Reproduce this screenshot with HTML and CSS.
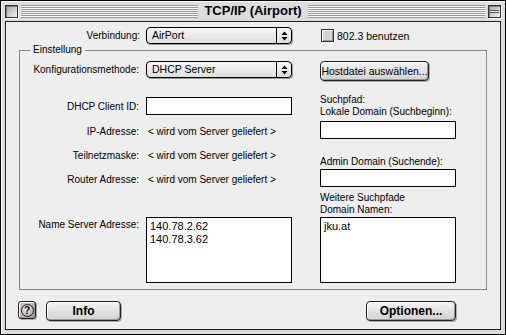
FILE: index.html
```html
<!DOCTYPE html>
<html lang="de">
  <head>
    <meta charset="UTF-8" />
    <title>TCP/IP (Airport)</title>
    <link rel="stylesheet" href="styles.css">
  </head>
  <body>
    <div class="window">
      <div class="titlebar">
        <span class="close-box"></span>
        <span class="stripes"></span>
        <span class="title">TCP/IP (Airport)</span>
        <span class="stripes"></span>
        <span class="shade-box"></span>
      </div>

      <div class="panel">
        <div class="top-row">
          <span class="top-label">Verbindung:</span>
          <div class="popup">
            <span class="popup-text">AirPort</span>
            <span class="popup-arrows">
              <svg width="7" height="10" viewBox="0 0 7 10"><path d="M3.5 0.5 L6.5 4 H0.5 Z M0.5 6 H6.5 L3.5 9.5 Z" fill="#000"/></svg>
            </span>
          </div>
          <label class="check"><span class="check-box"></span>802.3 benutzen</label>
        </div>

        <fieldset class="group">
          <legend>Einstellung</legend>
          <div class="cols">
            <div class="main">
              <div class="row row-konfig">
                <span class="lbl">Konfigurationsmethode:</span>
                <div class="popup">
                  <span class="popup-text">DHCP Server</span>
                  <span class="popup-arrows">
                    <svg width="7" height="10" viewBox="0 0 7 10"><path d="M3.5 0.5 L6.5 4 H0.5 Z M0.5 6 H6.5 L3.5 9.5 Z" fill="#000"/></svg>
                  </span>
                </div>
              </div>
              <div class="row row-dhcp">
                <span class="lbl">DHCP Client ID:</span>
                <div class="field"></div>
              </div>
              <div class="row row-info first">
                <span class="lbl">IP-Adresse:</span>
                <span class="value">&lt; wird vom Server geliefert &gt;</span>
              </div>
              <div class="row row-info">
                <span class="lbl">Teilnetzmaske:</span>
                <span class="value">&lt; wird vom Server geliefert &gt;</span>
              </div>
              <div class="row row-info">
                <span class="lbl">Router Adresse:</span>
                <span class="value">&lt; wird vom Server geliefert &gt;</span>
              </div>
              <div class="row row-ns">
                <span class="lbl">Name Server Adresse:</span>
                <div class="field listbox">140.78.2.62<br>140.78.3.62</div>
              </div>
            </div>

            <div class="side">
              <button class="btn btn-host">Hostdatei auswählen...</button>
              <p class="note note-search">Suchpfad:<br>Lokale Domain (Suchbeginn):</p>
              <div class="field field-side field-local"></div>
              <p class="note note-admin">Admin Domain (Suchende):</p>
              <div class="field field-side field-admin"></div>
              <p class="note note-more">Weitere Suchpfade<br>Domain Namen:</p>
              <div class="field field-side listbox">jku.at</div>
            </div>
          </div>
        </fieldset>

        <div class="bottom-bar">
          <button class="btn btn-help"><span class="help-icon">?</span></button>
          <button class="btn btn-bold btn-info">Info</button>
          <button class="btn btn-bold btn-options">Optionen...</button>
        </div>
      </div>
    </div>
  </body>
</html>
```

FILE: styles.css
```css
body {
  margin: 0;
  font-family: "Liberation Sans", Arial, sans-serif;
  font-size: 10px;
  color: #000;
  background: #fff;
}

.window {
  width: 506px;
  height: 335px;
  box-sizing: border-box;
  border: 1px solid #000;
  background: #dddddd;
  box-shadow: inset 1px 1px 0 #fff;
  padding: 0 4px 4px;
  display: flex;
  flex-direction: column;
}

/* title bar */
.titlebar {
  height: 20px;
  flex: none;
  display: flex;
  align-items: center;
  gap: 3px;
}

.close-box,
.shade-box {
  width: 13px;
  height: 13px;
  box-sizing: border-box;
  border: 1px solid #333;
  background: linear-gradient(135deg, #a9a9a9, #f0f0f0);
  box-shadow: inset 1px 1px 0 #777, 1px 1px 0 #fff;
  flex: none;
}

.shade-box {
  background: linear-gradient(#eee, #eee) center / 9px 1px no-repeat,
    linear-gradient(#555, #555) center / 9px 3px no-repeat,
    linear-gradient(135deg, #a9a9a9, #f0f0f0);
}

.stripes {
  flex: 1;
  height: 13px;
  background: repeating-linear-gradient(to bottom, #999 0 1px, #fafafa 1px 2px);
}

.title {
  font-size: 13px;
  font-weight: bold;
  line-height: 20px;
  padding: 0 3px;
}

/* content panel */
.panel {
  flex: 1;
  border: 1px solid #222;
  background: #eeeeee;
  display: flex;
  flex-direction: column;
}

.top-row {
  display: flex;
  align-items: center;
  margin-top: 5px;
  height: 17px;
}

.top-label {
  width: 134px;
  margin-right: 6px;
  text-align: right;
}

.popup {
  width: 146px;
  height: 17px;
  box-sizing: border-box;
  border: 1px solid #000;
  border-radius: 4px;
  background: linear-gradient(#f6f6f6, #dedede);
  box-shadow: 1px 1px 0 #999;
  display: flex;
  flex: none;
}

.popup-text {
  flex: 1;
  padding-left: 5px;
  line-height: 15px;
  font-size: 10.5px;
}

.popup-arrows {
  width: 14px;
  border-left: 1px solid #000;
  display: flex;
  align-items: center;
  justify-content: center;
}

.check {
  margin-left: 29px;
  display: flex;
  align-items: center;
  gap: 3px;
  font-size: 10.5px;
}

.check-box {
  width: 13px;
  height: 13px;
  box-sizing: border-box;
  border: 1px solid #333;
  background: #d4d4d4;
  box-shadow: inset 1px 1px 0 #fff, inset -1px -1px 0 #999;
}

/* group box */
.group {
  margin: 0 0 0 13px;
  width: 468px;
  box-sizing: border-box;
  border: 1px solid #888;
  padding: 5px 0 6px 0;
}

.group legend {
  margin-left: 10px;
  padding: 0 3px;
  line-height: 12px;
}

.cols {
  display: flex;
  gap: 28px;
}

.main {
  display: flex;
  flex-direction: column;
}

.row {
  display: flex;
  align-items: center;
  gap: 7px;
}

.lbl {
  width: 119px;
  flex: none;
  text-align: right;
}

.row-konfig {
  height: 17px;
}

.row-dhcp {
  margin-top: 19px;
}

.row-info {
  height: 24px;
}

.row-info.first {
  margin-top: 4px;
}

.value {
  padding-left: 2px;
}

.row-ns {
  margin-top: 26px;
  align-items: flex-start;
}

.row-ns .lbl {
  margin-top: 2px;
}

.field {
  width: 146px;
  height: 18px;
  box-sizing: border-box;
  border: 1px solid #000;
  background: #fff;
  flex: none;
}

.listbox {
  height: 66px;
  padding: 2px 3px;
  font-size: 11px;
  line-height: 13px;
}

.side {
  width: 136px;
  display: flex;
  flex-direction: column;
  align-items: flex-start;
}

.field-side {
  width: 136px;
}

.note {
  margin: 0;
  line-height: 12px;
}

.note-search {
  margin-top: 13px;
}

.field-local {
  margin-top: 3px;
}

.note-admin {
  margin-top: 17px;
}

.field-admin {
  margin-top: 1px;
}

.note-more {
  margin-top: 5px;
}

.note-more + .field {
  margin-top: 1px;
}

/* buttons */
.btn {
  box-sizing: border-box;
  border: 1px solid #222;
  border-radius: 4px;
  background: linear-gradient(#f4f4f4, #d2d2d2);
  box-shadow: inset 1px 1px 0 #fff, inset -1px -1px 0 #9a9a9a, 1px 1px 0 #aaa;
  font-family: inherit;
  font-size: 10.5px;
  color: #000;
  padding: 0;
  display: flex;
  align-items: center;
  justify-content: center;
  flex: none;
}

.btn-host {
  width: 109px;
  height: 20px;
}

.btn-bold {
  font-size: 12px;
  font-weight: bold;
  height: 20px;
}

.bottom-bar {
  display: flex;
  align-items: flex-start;
  gap: 10px;
  margin-top: 11px;
  padding: 0 44px 0 12px;
}

.btn-help {
  width: 18px;
  height: 18px;
  border-radius: 3px;
  background: linear-gradient(135deg, #c8c8c8, #a0a0a0);
}

.help-icon {
  width: 13px;
  height: 13px;
  box-sizing: border-box;
  border: 1px solid #222;
  border-radius: 50%;
  background: radial-gradient(circle at 35% 35%, #f0f0f0, #9a9a9a);
  font-size: 10px;
  font-weight: bold;
  line-height: 11px;
  text-align: center;
  color: #111;
}

.btn-info {
  width: 75px;
}

.btn-options {
  width: 90px;
  margin-left: auto;
}
```
